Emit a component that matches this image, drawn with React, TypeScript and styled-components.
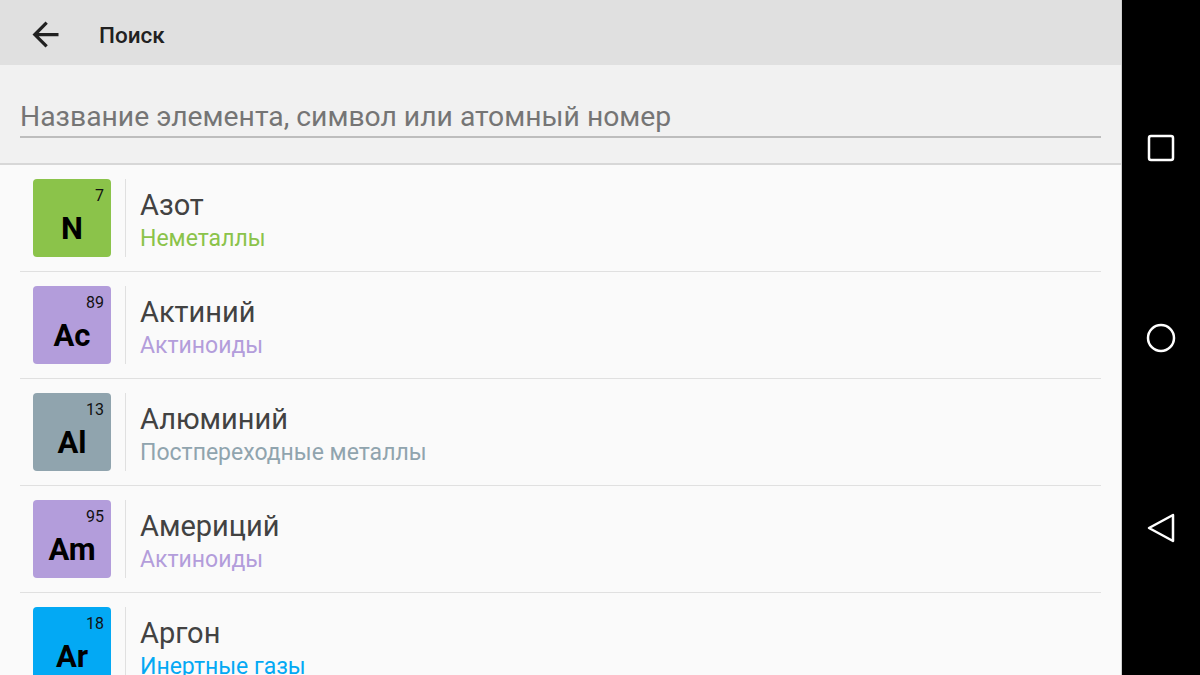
import styled, { createGlobalStyle } from 'styled-components';

const GlobalStyle = createGlobalStyle`
  html, body {
    margin: 0;
    padding: 0;
    overflow: hidden;
  }
  body {
    font-family: Roboto, 'Noto Sans', sans-serif;
  }
`;

const Screen = styled.div`
  display: flex;
  width: 1200px;
  height: 675px;
  overflow: hidden;
`;

const Main = styled.div`
  width: 1121px;
  display: flex;
  flex-direction: column;
  background-color: #fafafa;
  border-right: 1px solid #cfcfcf;
`;

const Toolbar = styled.div`
  height: 65px;
  flex-shrink: 0;
  background-color: #e0e0e0;
  display: flex;
  align-items: center;
  padding-left: 26px;
`;

const BackButton = styled.div`
  width: 39px;
  height: 39px;
  display: flex;
  align-items: center;
  justify-content: center;
  margin-right: 34px;
  margin-top: 4px;
`;

const Title = styled.div`
  font-size: 22.5px;
  font-weight: 500;
  color: #212121;
  padding-top: 4px;
`;

const SearchArea = styled.div`
  height: 98px;
  flex-shrink: 0;
  background-color: #f1f1f1;
  border-bottom: 2px solid #d7d7d7;
  padding: 0 20px;
  display: flex;
  flex-direction: column;
`;

const SearchInput = styled.div`
  margin-top: 33px;
  height: 38px;
  border-bottom: 2px solid #bdbdbd;
  font-size: 28.3px;
  color: #757575;
  line-height: 38px;
  white-space: nowrap;
`;

const List = styled.div`
  flex: 1;
  overflow: hidden;
`;

const Row = styled.div`
  display: flex;
  align-items: stretch;
  padding: 14px 0 14px 13px;
  margin: 0 20px;
  border-bottom: 1px solid #e0e0e0;
`;

const Tile = styled.div<{ $color: string }>`
  position: relative;
  width: 78px;
  height: 78px;
  flex-shrink: 0;
  border-radius: 4px;
  background-color: ${(p) => p.$color};
  display: flex;
  align-items: flex-end;
  justify-content: center;
  padding-bottom: 13px;
  box-sizing: border-box;
`;

const Symbol = styled.div`
  font-weight: 700;
  font-size: 31px;
  color: #000;
  line-height: 1;
`;

const Number = styled.div`
  position: absolute;
  top: 9px;
  right: 7px;
  font-size: 16px;
  color: #111;
  line-height: 1;
`;

const Separator = styled.div`
  width: 1px;
  background-color: #e0e0e0;
  margin: 0 14px;
`;

const Info = styled.div`
  display: flex;
  flex-direction: column;
  padding-top: 9px;
`;

const Name = styled.div`
  font-size: 29px;
  color: #424242;
  line-height: 34px;
`;

const Category = styled.div<{ $color: string }>`
  font-size: 23px;
  color: ${(p) => p.$color};
  line-height: 28px;
  margin-top: 3px;
  white-space: nowrap;
`;

const NavBar = styled.div`
  flex: 1;
  background-color: #000;
  display: flex;
  flex-direction: column;
  align-items: center;
  justify-content: center;
  gap: 160px;
`;

const NavIcon = styled.div`
  width: 30px;
  height: 30px;
  display: flex;
  align-items: center;
  justify-content: center;
`;

const elements = [
  { symbol: 'N', number: 7, name: 'Азот', category: 'Неметаллы', color: '#8bc34a' },
  { symbol: 'Ac', number: 89, name: 'Актиний', category: 'Актиноиды', color: '#b39ddb' },
  { symbol: 'Al', number: 13, name: 'Алюминий', category: 'Постпереходные металлы', color: '#90a4ae' },
  { symbol: 'Am', number: 95, name: 'Америций', category: 'Актиноиды', color: '#b39ddb' },
  { symbol: 'Ar', number: 18, name: 'Аргон', category: 'Инертные газы', color: '#03a9f4' },
];

export default function App() {
  return (
    <>
      <GlobalStyle />
      <Screen>
        <Main>
          <Toolbar>
            <BackButton>
              <svg width="39" height="39" viewBox="0 0 24 24">
                <path d="M20 11H7.83l5.59-5.59L12 4l-8 8 8 8 1.41-1.41L7.83 13H20v-2z" fill="#212121" />
              </svg>
            </BackButton>
            <Title>Поиск</Title>
          </Toolbar>
          <SearchArea>
            <SearchInput>Название элемента, символ или атомный номер</SearchInput>
          </SearchArea>
          <List>
            {elements.map((el) => (
              <Row key={el.symbol}>
                <Tile $color={el.color}>
                  <Number>{el.number}</Number>
                  <Symbol>{el.symbol}</Symbol>
                </Tile>
                <Separator />
                <Info>
                  <Name>{el.name}</Name>
                  <Category $color={el.color}>{el.category}</Category>
                </Info>
              </Row>
            ))}
          </List>
        </Main>
        <NavBar>
          <NavIcon>
            <svg width="28" height="28" viewBox="0 0 28 28">
              <rect x="2" y="2" width="24" height="24" rx="2" fill="none" stroke="#fff" strokeWidth="2.5" />
            </svg>
          </NavIcon>
          <NavIcon>
            <svg width="30" height="30" viewBox="0 0 30 30">
              <circle cx="15" cy="15" r="13" fill="none" stroke="#fff" strokeWidth="2.5" />
            </svg>
          </NavIcon>
          <NavIcon>
            <svg width="30" height="32" viewBox="0 0 30 32">
              <path d="M27 3 L3 16 L27 29 Z" fill="none" stroke="#fff" strokeWidth="2.5" strokeLinejoin="round" />
            </svg>
          </NavIcon>
        </NavBar>
      </Screen>
    </>
  );
}
